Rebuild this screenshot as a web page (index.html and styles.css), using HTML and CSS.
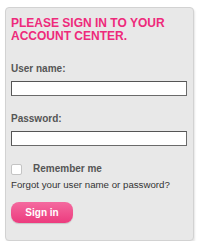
FILE: index.html
```html
<!DOCTYPE html>
<html lang="en">
<head>
    <meta charset="UTF-8">
    <title>Sign in</title>
    <link rel="stylesheet" href="styles.css">
</head>
<body>
    <div class="login-box">
        <h2>PLEASE SIGN IN TO YOUR ACCOUNT CENTER.</h2>
        <form id="loginForm" action="#" method="post">
            <label for="username">User name:</label>
            <input type="text" id="username" name="username">

            <label for="password">Password:</label>
            <input type="password" id="password" name="password">

            <div class="remember">
                <input type="checkbox" id="remember" name="remember">
                <label for="remember">Remember me</label>
            </div>
            <a class="forgot" href="#">Forgot your user name or password?</a>

            <button type="submit" class="btn">Sign in</button>
        </form>
    </div>
</body>
</html>
```

FILE: styles.css
```css
body {
    font-family: "Liberation Sans", Arial, sans-serif;
    background-color: #fff;
    margin: 0;
    padding: 7px 8px 0 5px;
}
.login-box {
    background-color: #e8e8e8;
    border: 1px solid #d2d2d2;
    border-radius: 4px;
    box-shadow: 1px 2px 2px rgba(0, 0, 0, 0.1);
    padding: 9px 6px 0 5px;
    height: 234px;
    box-sizing: border-box;
}
h2 {
    color: #ee2a7b;
    font-size: 12px;
    line-height: 13px;
    margin: 0 0 20px 0;
}
label {
    display: block;
    font-size: 10px;
    line-height: 12px;
    font-weight: bold;
    color: #555;
    margin-bottom: 6px;
}
input[type="text"],
input[type="password"] {
    display: block;
    width: 100%;
    height: 15px;
    box-sizing: border-box;
    border: 1px solid #6a6a6a;
    border-top-color: #555;
    border-left-color: #555;
    background: #fff;
    margin: 0 0 17px 0;
    padding: 0 2px;
}
.remember {
    display: flex;
    align-items: center;
    height: 12px;
    margin-bottom: 4px;
}
.remember input {
    width: 11px;
    height: 11px;
    margin: 0 11px 0 0;
    appearance: none;
    background: #fff;
    border: 1px solid #c4c4c4;
    border-radius: 2px;
}
.remember label {
    margin: 0;
}
.forgot {
    display: block;
    font-size: 9.7px;
    line-height: 12px;
    color: #333;
    text-decoration: none;
    margin-bottom: 11px;
}
.btn {
    display: block;
    width: 62px;
    height: 21px;
    border: none;
    border-radius: 8px;
    background: linear-gradient(#f46a9f, #ec3b7e);
    color: #fff;
    font-family: inherit;
    font-size: 10px;
    font-weight: bold;
    box-shadow: 0 1px 1px rgba(0, 0, 0, 0.15);
    cursor: pointer;
}
```
